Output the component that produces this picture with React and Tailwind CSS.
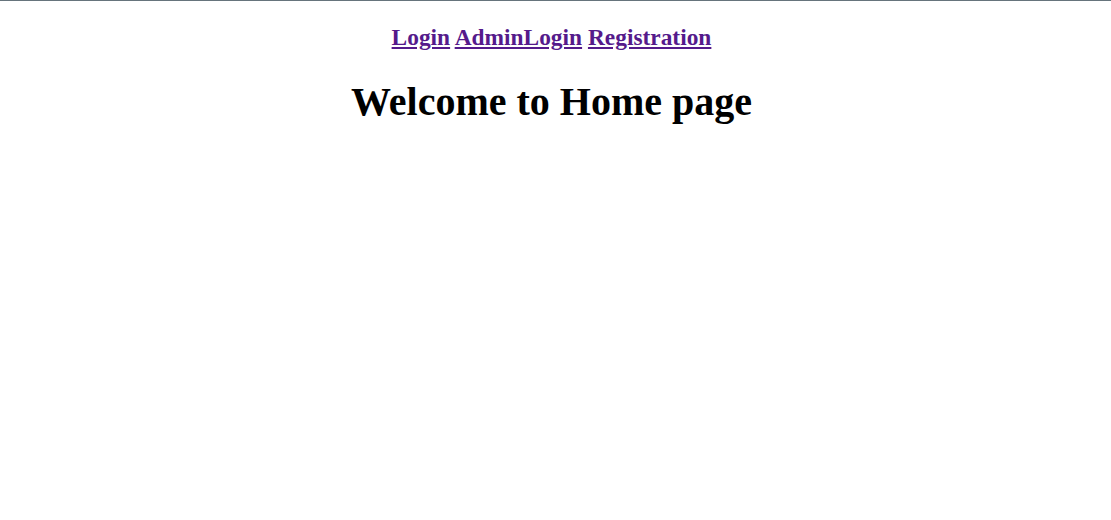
import React from 'react';

export default function App() {
  const links = ['Login', 'AdminLogin', 'Registration'];

  return (
    <div className="min-h-[520px] bg-white border-t border-[#66747c] pr-2 font-['Liberation_Serif',serif] text-center">
      {/* Навигация */}
      <h3 className="mt-[23.4px] mb-0 text-[23.4px] font-bold leading-[normal]">
        {links.map((l, i) => (
          <React.Fragment key={l}>
            {i > 0 && ' '}
            <a href="#" className="text-[#551a8b] underline">
              {l}
            </a>
          </React.Fragment>
        ))}
      </h3>

      {/* Заголовок */}
      <h1 className="mt-[26.8px] text-[40px] font-bold leading-[normal] text-black">
        Welcome to Home page
      </h1>
    </div>
  );
}
